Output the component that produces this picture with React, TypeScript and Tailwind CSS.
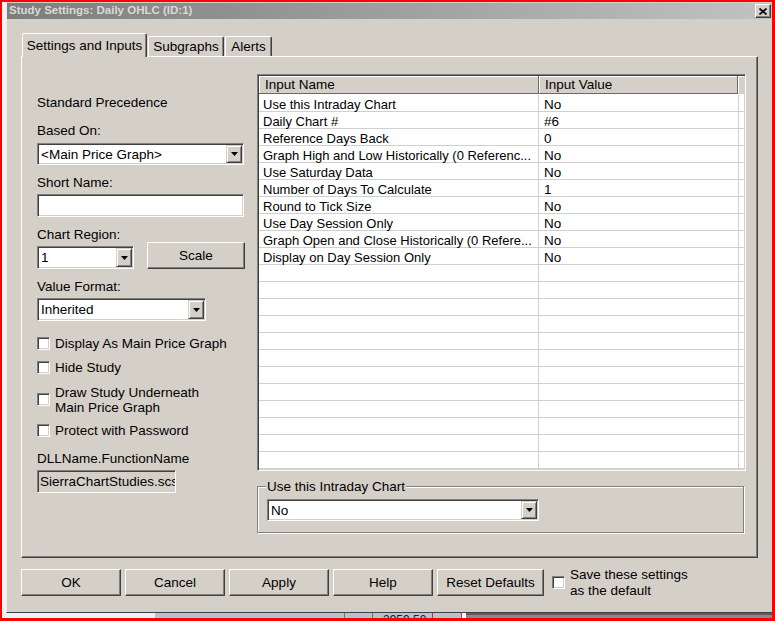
import React from 'react';

const rows: [string, string][] = [
  ['Use this Intraday Chart', 'No'],
  ['Daily Chart #', '#6'],
  ['Reference Days Back', '0'],
  ['Graph High and Low Historically (0 Referenc...', 'No'],
  ['Use Saturday Data', 'No'],
  ['Number of Days To Calculate', '1'],
  ['Round to Tick Size', 'No'],
  ['Use Day Session Only', 'No'],
  ['Graph Open and Close Historically (0 Refere...', 'No'],
  ['Display on Day Session Only', 'No'],
];

function Arrow() {
  return (
    <svg width="7" height="4" viewBox="0 0 7 4">
      <path d="M0 0h7L3.5 4z" fill="#000" />
    </svg>
  );
}

function Combo({ text, className }: { text: string; className: string }) {
  return (
    <div
      className={`flex bg-white border border-t-[#808080] border-l-[#808080] border-r-white border-b-white p-[1px] shadow-[inset_1px_1px_0_#404040,inset_-1px_-1px_0_#d4d0c8] ${className}`}
    >
      <div className="flex-1 flex items-center pl-[2px] pt-[2px] whitespace-nowrap overflow-hidden">{text}</div>
      <div className="w-[16px] flex items-center justify-center bg-[#d4d0c8] border border-t-[#d4d0c8] border-l-[#d4d0c8] border-r-[#404040] border-b-[#404040] shadow-[inset_1px_1px_0_#fff,inset_-1px_-1px_0_#808080]">
        <Arrow />
      </div>
    </div>
  );
}

function Check() {
  return (
    <div className="w-[13px] h-[13px] shrink-0 bg-white border border-t-[#808080] border-l-[#808080] border-r-white border-b-white shadow-[inset_1px_1px_0_#404040,inset_-1px_-1px_0_#d4d0c8]" />
  );
}

function Btn({ label, className }: { label: string; className: string }) {
  return (
    <div
      className={`flex items-center justify-center pt-[2px] bg-[#d4d0c8] border border-t-white border-l-white border-r-[#404040] border-b-[#404040] shadow-[inset_-1px_-1px_0_#808080] ${className}`}
    >
      {label}
    </div>
  );
}

function CheckRow({ label, className = '' }: { label: React.ReactNode; className?: string }) {
  return (
    <div className={`flex items-center gap-[5px] ${className}`}>
      <Check />
      <div className="pt-[1px]">{label}</div>
    </div>
  );
}

export default function App() {
  const gridRows = Array.from({ length: 22 }, (_, i) => rows[i] || ['', '']);

  return (
    <div className="w-[775px] h-[621px] bg-[#ff0000] pt-[2px] pl-[2px] pr-[3px] pb-[3px] flex flex-col overflow-hidden font-['Liberation_Sans',Arial,sans-serif] text-[13.5px] text-black">
      <div className="flex flex-1 min-h-0">
        {/* chart window showing behind the dialog */}
        <div className="w-[4px] bg-[#f2f2f2]" />

        <div className="flex-1 flex flex-col bg-[#d4d0c8] border-t border-l border-t-[#d4d0c8] border-l-[#ecebe6] border-b border-b-[#404040]">
          {/* title bar */}
          <div className="h-[16px] flex items-center justify-between bg-linear-to-r from-[#7d7d7d] to-[#c2c2c2]">
            <span className="pl-[2px] text-[11.5px] font-bold text-[#dcd9d2] leading-none">
              Study Settings: Daily OHLC (ID:1)
            </span>
            <div className="w-[16px] h-[14px] mr-[1px] flex items-center justify-center bg-[#d4d0c8] border border-t-white border-l-white border-r-[#404040] border-b-[#404040] shadow-[inset_-1px_-1px_0_#808080]">
              <svg width="8" height="7" viewBox="0 0 8 7">
                <path d="M0.5 0.5L7.5 6.5M7.5 0.5L0.5 6.5" stroke="#000" strokeWidth="1.6" />
              </svg>
            </div>
          </div>

          <div className="pl-[14px] flex flex-col">
            {/* tabs */}
            <div className="mt-[14px] h-[24px] -mb-px relative z-10 flex items-end gap-[1px] pl-[1px]">
              <div className="h-[24px] w-[125px] pt-[1px] flex items-center justify-center bg-[#d4d0c8] border-t border-l border-t-white border-l-white border-r border-r-[#404040] shadow-[inset_-1px_0_0_#808080] rounded-tl-[2px] rounded-tr-[2px]">
                Settings and Inputs
              </div>
              <div className="h-[20px] w-[76px] mb-[1px] pt-[1px] flex items-center justify-center border-t border-l border-t-white border-l-white border-r border-r-[#404040] shadow-[inset_-1px_0_0_#808080] rounded-tl-[2px] rounded-tr-[2px]">
                Subgraphs
              </div>
              <div className="h-[20px] w-[47px] mb-[1px] pt-[1px] flex items-center justify-center border-t border-l border-t-white border-l-white border-r border-r-[#404040] shadow-[inset_-1px_0_0_#808080] rounded-tl-[2px] rounded-tr-[2px]">
                Alerts
              </div>
            </div>

            {/* tab panel */}
            <div className="w-[737px] h-[502px] flex border border-t-white border-l-white border-r-[#404040] border-b-[#404040] shadow-[inset_-1px_-1px_0_#808080]">
              {/* left column */}
              <div className="ml-[15px] w-[208px] flex flex-col">
                <div className="mt-[38px] leading-[16px]">Standard Precedence</div>
                <div className="mt-[12px] leading-[16px]">Based On:</div>
                <Combo text="<Main Price Graph>" className="mt-[4px] w-[207px] h-[22px]" />
                <div className="mt-[10px] leading-[16px]">Short Name:</div>
                <div className="mt-[3px] w-[207px] h-[23px] bg-white border border-t-[#808080] border-l-[#808080] border-r-white border-b-white shadow-[inset_1px_1px_0_#404040,inset_-1px_-1px_0_#d4d0c8]" />
                <div className="mt-[10px] leading-[16px]">Chart Region:</div>
                <div className="h-[27px] -mt-px flex items-end">
                  <Combo text="1" className="w-[97px] h-[23px]" />
                  <Btn label="Scale" className="ml-[13px] w-[98px] h-[27px]" />
                </div>
                <div className="mt-[10px] leading-[16px]">Value Format:</div>
                <Combo text="Inherited" className="mt-[3px] w-[169px] h-[23px]" />
                <CheckRow className="mt-[14px] leading-[16px]" label="Display As Main Price Graph" />
                <CheckRow className="mt-[7px] leading-[16px]" label="Hide Study" />
                <CheckRow
                  className="mt-[8px] leading-[15px]"
                  label={
                    <>
                      Draw Study Underneath
                      <br />
                      Main Price Graph
                    </>
                  }
                />
                <CheckRow className="mt-[7px] leading-[16px]" label="Protect with Password" />
                <div className="mt-[12px] leading-[16px]">DLLName.FunctionName</div>
                <div className="mt-[3px] w-[139px] h-[23px] flex items-center pt-[2px] px-[2px] whitespace-nowrap overflow-hidden bg-[#d4d0c8] border border-t-[#808080] border-l-[#808080] border-r-white border-b-white shadow-[inset_1px_1px_0_#404040,inset_-1px_-1px_0_#d4d0c8]">
                  SierraChartStudies.scs
                </div>
              </div>

              {/* right column */}
              <div className="ml-[12px] w-[489px] flex flex-col">
                <div className="mt-[17px] h-[397px] flex flex-col bg-white overflow-hidden text-[13px] border border-t-[#808080] border-l-[#808080] border-r-white border-b-white p-[1px] shadow-[inset_1px_1px_0_#404040,inset_-1px_-1px_0_#d4d0c8]">
                  <div className="h-[18px] shrink-0 flex bg-[#d4d0c8] text-[13.5px]">
                    <div className="w-[280px] flex items-center pl-[6px] pt-[1px] border-r border-b border-[#6a6a6a] shadow-[inset_1px_1px_0_#fff]">
                      Input Name
                    </div>
                    <div className="w-[199px] flex items-center pl-[6px] pt-[1px] border-r border-b border-[#6a6a6a] shadow-[inset_1px_1px_0_#fff]">
                      Input Value
                    </div>
                    <div className="flex-1 border-b border-[#d4d0c8] shadow-[inset_1px_1px_0_#fff]" />
                  </div>
                  <div className="mt-[1px] flex flex-col">
                    {gridRows.map(([name, value], i) => (
                      <div key={i} className="h-[17px] shrink-0 flex border-b border-[#d0d0d0] leading-[16px]">
                        <div className="w-[280px] pl-[4px] pt-[2px] border-r border-[#d0d0d0] whitespace-nowrap">
                          {name}
                        </div>
                        <div className="w-[200px] pl-[5px] pt-[2px] border-r border-[#d0d0d0] whitespace-nowrap text-[13.5px]">
                          {value}
                        </div>
                        <div className="flex-1" />
                      </div>
                    ))}
                  </div>
                </div>

                <div className="relative mt-[15px] w-[487px] h-[47px] border border-[#808080] shadow-[inset_1px_1px_0_#fff,1px_1px_0_#fff]">
                  <span className="absolute left-[8px] top-[-8px] px-[1px] leading-[16px] bg-[#d4d0c8]">
                    Use this Intraday Chart
                  </span>
                  <Combo text="No" className="mt-[12px] ml-[9px] w-[272px] h-[22px]" />
                </div>
              </div>
            </div>

            {/* bottom buttons */}
            <div className="mt-[11px] h-[27px] flex items-center">
              <Btn label="OK" className="w-[100px] h-[27px]" />
              <Btn label="Cancel" className="ml-[4px] w-[100px] h-[27px]" />
              <Btn label="Apply" className="ml-[4px] w-[100px] h-[27px]" />
              <Btn label="Help" className="ml-[4px] w-[100px] h-[27px]" />
              <Btn label="Reset Defaults" className="ml-[4px] w-[107px] h-[27px]" />
              <div className="ml-[8px] flex items-center gap-[5px] leading-[16px]">
                <Check />
                <div className="pt-[1px]">
                  Save these settings
                  <br />
                  as the default
                </div>
              </div>
            </div>
          </div>
        </div>
      </div>

      {/* chart window strip below the dialog */}
      <div className="h-[5px] flex overflow-hidden">
        <div className="w-[153px] bg-[#e6f4f8]" />
        <div className="w-[190px] bg-[#b4c3d1] border-r border-[#3c9a3c]" />
        <div className="w-[28px] bg-[#b4c3d1] border-r border-[#3c9a3c]" />
        <div className="w-[60px] bg-[#b4c3d1] border-r border-[#d03030] overflow-hidden">
          <div className="pl-[10px] text-[12px] leading-[14px] text-[#202020]">2959.50</div>
        </div>
        <div className="w-[29px] bg-[#b4c3d1] border-r border-[#d03030]" />
        <div className="w-[4px] bg-white" />
        <div className="flex-1 bg-[#8a8a8a] border-t-2 border-[#5c5c5c]" />
      </div>
    </div>
  );
}
